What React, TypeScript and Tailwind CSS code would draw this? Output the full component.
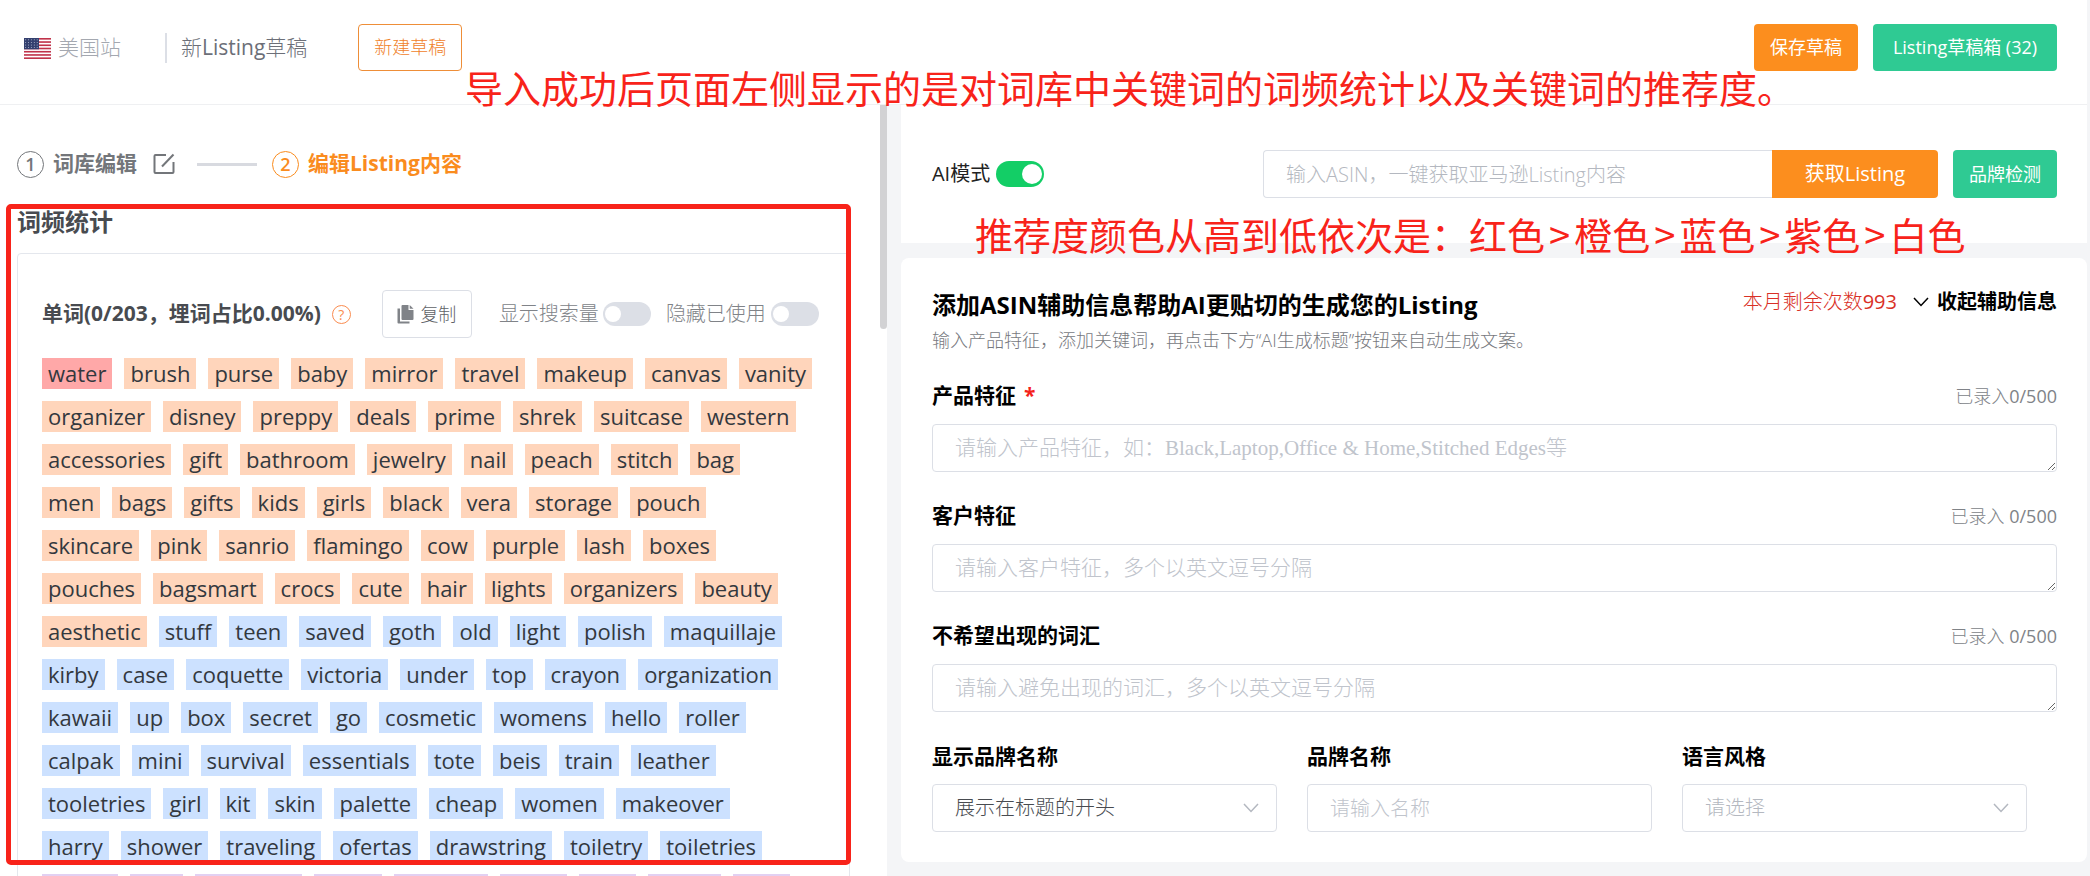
import type { ReactNode } from "react";

const tagColors = {
  red: "bg-[#ffa8a8]",
  orange: "bg-[#ffd5bb]",
  blue: "bg-[#cce1ff]",
};

type TagColor = keyof typeof tagColors;

// One entry per line of the word cloud, colour = recommendation level
const wordRows: { color: TagColor; words: string[] }[][] = [
  [
    { color: "red", words: ["water"] },
    { color: "orange", words: ["brush", "purse", "baby", "mirror", "travel", "makeup", "canvas", "vanity"] },
  ],
  [{ color: "orange", words: ["organizer", "disney", "preppy", "deals", "prime", "shrek", "suitcase", "western"] }],
  [{ color: "orange", words: ["accessories", "gift", "bathroom", "jewelry", "nail", "peach", "stitch", "bag"] }],
  [{ color: "orange", words: ["men", "bags", "gifts", "kids", "girls", "black", "vera", "storage", "pouch"] }],
  [{ color: "orange", words: ["skincare", "pink", "sanrio", "flamingo", "cow", "purple", "lash", "boxes"] }],
  [{ color: "orange", words: ["pouches", "bagsmart", "crocs", "cute", "hair", "lights", "organizers", "beauty"] }],
  [
    { color: "orange", words: ["aesthetic"] },
    { color: "blue", words: ["stuff", "teen", "saved", "goth", "old", "light", "polish", "maquillaje"] },
  ],
  [{ color: "blue", words: ["kirby", "case", "coquette", "victoria", "under", "top", "crayon", "organization"] }],
  [{ color: "blue", words: ["kawaii", "up", "box", "secret", "go", "cosmetic", "womens", "hello", "roller"] }],
  [{ color: "blue", words: ["calpak", "mini", "survival", "essentials", "tote", "beis", "train", "leather"] }],
  [{ color: "blue", words: ["tooletries", "girl", "kit", "skin", "palette", "cheap", "women", "makeover"] }],
  [{ color: "blue", words: ["harry", "shower", "traveling", "ofertas", "drawstring", "toiletry", "toiletries"] }],
];

const pendingTags = ["w-[76px]", "w-[53px]", "w-[107px]", "w-[68px]", "w-[94px]", "w-[67px]", "w-[57px]", "w-[73px]", "w-[57px]"];

const fields = [
  { id: "product", label: "产品特征", required: true, count: "已录入0/500", placeholder: "请输入产品特征，如：Black,Laptop,Office & Home,Stitched Edges等" },
  { id: "customer", label: "客户特征", required: false, count: "已录入 0/500", placeholder: "请输入客户特征，多个以英文逗号分隔" },
  { id: "avoid", label: "不希望出现的词汇", required: false, count: "已录入 0/500", placeholder: "请输入避免出现的词汇，多个以英文逗号分隔" },
];

const levels = ["红色", "橙色", "蓝色", "紫色", "白色"];

const control = "h-12 w-full rounded border border-[#dcdfe6] bg-white px-[22px] text-[20px] outline-none placeholder:text-[#c0c4cc]";

function UsFlag() {
  return (
    <svg width="27" height="21" viewBox="0 0 27 21" aria-hidden="true">
      <rect width="27" height="21" fill="#fff" />
      {[0, 1, 2, 3, 4, 5, 6].map((i) => (
        <rect key={i} y={i * 3.23} width="27" height="1.62" fill="#c0334a" />
      ))}
      <rect width="15" height="11.3" fill="#34406f" />
      {[0, 1, 2, 3].map((r) =>
        [0, 1, 2, 3, 4].map((c) => (
          <circle key={`${r}-${c}`} cx={1.6 + c * 2.9} cy={1.8 + r * 2.6} r="0.5" fill="#b9c0d6" />
        ))
      )}
    </svg>
  );
}

function EditIcon() {
  return (
    <svg width="22" height="22" viewBox="0 0 22 22" fill="none" stroke="#73767a" strokeWidth="2" aria-hidden="true">
      <path d="M13 2H2.500Q1.500 2 1.500 3V19Q1.500 20 2.500 20H19.500Q20.500 20 20.500 19V9" />
      <path d="M9 13.500L20.500 1.500" />
    </svg>
  );
}

function CopyIcon() {
  return (
    <svg width="17" height="19" viewBox="0 0 17 19" fill="#808388" aria-hidden="true">
      <path d="M5.500 0H11.500V5H16.500V14Q16.500 15 15.500 15H5.500Q4.500 15 4.500 14V1Q4.500 0 5.500 0Z" />
      <path d="M12.700 0L16.500 3.800H12.700Z" />
      <path d="M0.500 3.500H3V16.500H12.500V18.500H1.500Q0.500 18.500 0.500 17.500Z" />
    </svg>
  );
}

function ThinChevron() {
  return (
    <svg width="16" height="10" viewBox="0 0 16 10" fill="none" stroke="currentColor" strokeWidth="1.500" aria-hidden="true">
      <path d="M1 1L8 8.500L15 1" />
    </svg>
  );
}

function Toggle({ id, on }: { id: string; on?: boolean }) {
  return (
    <input
      id={id}
      type="checkbox"
      role="switch"
      defaultChecked={on}
      className="flex h-6 w-12 shrink-0 appearance-none items-center rounded-full bg-[#dcdfe6] px-[2px] before:size-4 before:rounded-full before:bg-white checked:h-[26px] checked:justify-end checked:bg-[#13ce66] checked:before:size-5"
    />
  );
}

function Step({ n, children, active }: { n: number; children: ReactNode; active?: boolean }) {
  return (
    <div className={active ? "flex items-center gap-[9px] text-[#fa8c1e]" : "flex items-center gap-[9px] text-[#73767a]"}>
      <span className="flex size-[27px] items-center justify-center rounded-full border border-current text-[18px] font-semibold">{n}</span>
      <span className="text-[21px] font-bold">{children}</span>
    </div>
  );
}

function WordPanel() {
  return (
    <section className="relative w-[42.5%] shrink-0 overflow-hidden bg-white pl-[17px] pr-[37px] pt-[43px]">
      <div className="flex h-8 items-center">
        <Step n={1}>词库编辑</Step>
        <button type="button" aria-label="编辑词库" className="ml-4"><EditIcon /></button>
        <span className="ml-[22px] mr-[15px] h-[3px] w-[60px] bg-[#d8dae0]" />
        <Step n={2} active>编辑Listing内容</Step>
      </div>

      <h2 className="mt-6 h-9 text-[24px] leading-9 font-bold text-[#484b50]">词频统计</h2>

      <div className="mt-[13px] rounded border border-[#e4e7ed] px-6 pt-9">
        <div className="flex h-12 items-center whitespace-nowrap">
          <h3 className="text-[21px] font-bold text-[#484b50]">单词(0/203，埋词占比0.00%)</h3>
          <span className="ml-[11px] flex size-[19px] items-center justify-center rounded-full border border-[#fa8c50] text-[14px] text-[#fa8c50]">?</span>
          <button type="button" className="ml-[31px] flex h-12 w-[90px] items-center justify-center gap-[6px] rounded border border-[#dcdfe6] text-[18px] font-light text-[#606266]">
            <CopyIcon />复制
          </button>
          <label htmlFor="volume" className="ml-[27px] mr-1 text-[20px] font-light text-[#808388]">显示搜索量</label>
          <Toggle id="volume" />
          <label htmlFor="used" className="ml-[15px] mr-[5px] text-[20px] font-light text-[#808388]">隐藏已使用</label>
          <Toggle id="used" />
        </div>

        <div className="mt-5 flex flex-col gap-3 text-[22px] leading-[31px] text-[#33383e]">
          {wordRows.map((row, i) => (
            <div key={i} className="flex gap-3">
              {row.map((group) =>
                group.words.map((word) => (
                  <span key={word} className={`h-[31px] px-[6px] ${tagColors[group.color]}`}>{word}</span>
                ))
              )}
            </div>
          ))}
          <div className="flex gap-3">
            {pendingTags.map((width, i) => (
              <span key={i} className={`h-[31px] bg-[#e2d0f2] ${width}`} />
            ))}
          </div>
        </div>
      </div>

      {/* scroll thumb */}
      <div className="absolute right-0 top-0 h-56 w-[7px] rounded-b-full bg-[#d2d2d4]" />
      {/* highlight frame */}
      <div className="absolute bottom-[11px] left-[6px] right-9 top-[99px] rounded-[5px] border-5 border-[#f8231a]" />
    </section>
  );
}

function AsinBar() {
  return (
    <section className="flex h-[138px] items-start bg-white pl-[31px] pr-[30px] pt-[45px]">
      <div className="flex h-12 items-center gap-[6px]">
        <label htmlFor="ai" className="text-[20px] text-[#222]">AI模式</label>
        <Toggle id="ai" on />
      </div>
      <form className="ml-auto flex">
        <input
          aria-label="ASIN"
          placeholder="输入ASIN，一键获取亚马逊Listing内容"
          className="h-12 w-[509px] rounded-l border border-r-0 border-[#dcdfe6] px-[22px] text-[20px] font-light outline-none placeholder:text-[#b4b8c0]"
        />
        <button type="button" className="h-12 w-[166px] rounded-r bg-[#fc8e1e] text-[20px] text-white">获取Listing</button>
        <button type="button" className="ml-[15px] h-12 w-[104px] rounded bg-[#2fca93] text-[18px] text-white">品牌检测</button>
      </form>
    </section>
  );
}

function AssistForm() {
  return (
    <section className="mt-[15px] rounded-lg bg-white pb-[30px] pl-[31px] pr-[30px] pt-7">
      <div className="flex h-[38px] items-start justify-between">
        <h2 className="text-[24px] leading-[38px] font-bold text-black">添加ASIN辅助信息帮助AI更贴切的生成您的Listing</h2>
        <div className="flex items-center text-[20px] leading-8">
          <span className="font-light text-[#d93026]">本月剩余次数<span className="font-normal">993</span></span>
          <button type="button" className="ml-4 flex items-center gap-2 font-bold text-black">
            <ThinChevron />收起辅助信息
          </button>
        </div>
      </div>
      <p className="h-8 text-[18px] leading-8 font-light text-[#77797e]">输入产品特征，添加关键词，再点击下方“AI生成标题”按钮来自动生成文案。</p>

      {fields.map((f, i) => (
        <div key={f.id} className={i === 0 ? "mt-6" : "mt-7"}>
          <div className="flex h-8 items-center justify-between">
            <label htmlFor={f.id} className="text-[21px] font-bold text-black">
              {f.label}
              {f.required && <span className="ml-2 text-[#f5221b]">*</span>}
            </label>
            <span className="font-['Open_Sans','Noto_Sans_CJK_SC_Light','Noto_Sans_CJK_SC',sans-serif] text-[18px] leading-7 text-[#808388]">{f.count}</span>
          </div>
          <textarea
            id={f.id}
            placeholder={f.placeholder}
            className="mt-3 block h-12 w-full rounded border border-[#dcdfe6] px-[22px] py-[7px] font-['Liberation_Serif','Noto_Sans_CJK_SC',serif] text-[21px] leading-8 font-light outline-none placeholder:text-[#c0c4cc]"
          />
        </div>
      ))}

      <div className="mt-7 grid grid-cols-3">
        <div className="pr-[30px]">
          <label htmlFor="show" className="block h-8 text-[21px] leading-8 font-bold text-black">显示品牌名称</label>
          <div className="relative mt-3">
            <select id="show" className={`${control} appearance-none font-light text-[#484b50]`}>
              <option>展示在标题的开头</option>
            </select>
            <span className="pointer-events-none absolute right-[18px] top-[19px] text-[#b4b8c0]"><ThinChevron /></span>
          </div>
        </div>
        <div className="pr-[30px]">
          <label htmlFor="brand" className="block h-8 text-[21px] leading-8 font-bold text-black">品牌名称</label>
          <input id="brand" placeholder="请输入名称" className={`${control} mt-3 font-light`} />
        </div>
        <div className="pr-[30px]">
          <label htmlFor="tone" className="block h-8 text-[21px] leading-8 font-bold text-black">语言风格</label>
          <div className="relative mt-3">
            <select id="tone" className={`${control} appearance-none font-light text-[#b4b8c0]`}>
              <option>请选择</option>
            </select>
            <span className="pointer-events-none absolute right-[18px] top-[19px] text-[#b4b8c0]"><ThinChevron /></span>
          </div>
        </div>
      </div>
    </section>
  );
}

export default function App() {
  return (
    <div className="relative flex h-screen flex-col overflow-hidden bg-[#f4f5f7] pr-[3px] font-['Open_Sans','Noto_Sans_CJK_SC',sans-serif]">
      <header className="flex h-[105px] shrink-0 items-start border-b border-[#eff0f2] bg-white pl-6 pr-[30px] pt-6">
        <div className="flex h-12 items-center">
          <UsFlag />
          <span className="ml-[7px] text-[21px] font-light text-[#a4a8b0]">美国站</span>
          <span className="ml-[44px] h-[30px] w-[2px] bg-[#dcdfe6]" />
          <h1 className="ml-[14px] font-['Open_Sans','Noto_Sans_CJK_SC_Light','Noto_Sans_CJK_SC',sans-serif] text-[21px] text-[#6c6f78]">新Listing草稿</h1>
        </div>
        <button type="button" className="ml-[51px] h-[47px] w-[104px] rounded border border-[#ee8e38] text-[18px] font-light text-[#f0822a]">新建草稿</button>
        <button type="button" className="ml-auto h-[47px] w-[104px] rounded bg-[#fc8e1e] text-[18px] text-white">保存草稿</button>
        <button type="button" className="ml-[15px] h-[47px] w-[184px] rounded bg-[#2fca93] text-[18px] text-white">Listing草稿箱 (32)</button>
      </header>

      <div className="flex min-h-0 flex-1 gap-[14px]">
        <WordPanel />
        <main className="min-w-0 flex-1">
          <AsinBar />
          <AssistForm />
        </main>
      </div>

      {/* notes on top of the page */}
      <p className="absolute left-[465px] top-[59px] font-['Noto_Sans_CJK_SC',sans-serif] text-[38px] leading-[56px] whitespace-nowrap text-[#f8231a]">
        导入成功后页面左侧显示的是对词库中关键词的词频统计以及关键词的推荐度。
      </p>
      <p className="absolute left-[975px] top-[206px] font-['Noto_Sans_CJK_SC',sans-serif] text-[38px] leading-[56px] whitespace-nowrap text-[#f8231a]">
        推荐度颜色从高到低依次是：
        {levels.map((level, i) => (
          <span key={level}>
            {i > 0 && <span className="mx-1">&gt;</span>}
            {level}
          </span>
        ))}
      </p>
    </div>
  );
}
